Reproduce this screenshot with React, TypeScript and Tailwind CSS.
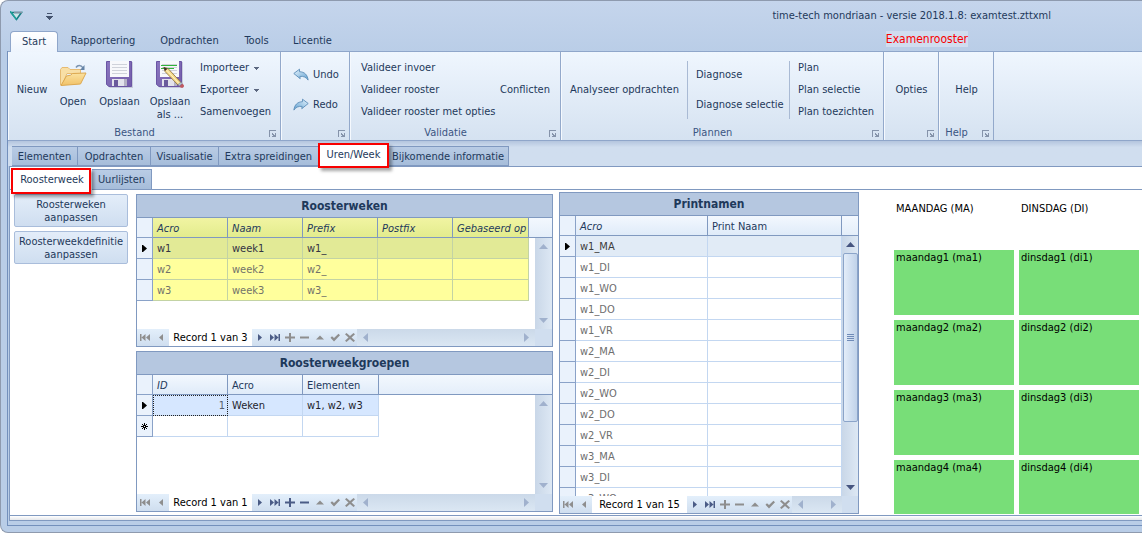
import type { ReactNode } from 'react';
import clsx from 'clsx';

interface Column {
  key: string;
  title: string;
  className: string;
  italic?: boolean;
}

interface GridProps {
  title: string;
  columns: Column[];
  rows: string[][];
  record: string;
  className?: string;
  tone?: 'yellow' | 'white' | 'blue';
  newRow?: boolean;
  scrollable?: boolean;
  canAdd?: boolean;
  narrow?: boolean;
}

const roosterColumns: Column[] = [
  { key: 'acro', title: 'Acro', className: 'w-[75px]', italic: true },
  { key: 'naam', title: 'Naam', className: 'w-[75px]', italic: true },
  { key: 'prefix', title: 'Prefix', className: 'w-[75px]', italic: true },
  { key: 'postfix', title: 'Postfix', className: 'w-[75px]', italic: true },
  { key: 'basis', title: 'Gebaseerd op', className: 'w-[76px]', italic: true },
];

const roosterRows = [
  ['w1', 'week1', 'w1_', '', ''],
  ['w2', 'week2', 'w2_', '', ''],
  ['w3', 'week3', 'w3_', '', ''],
];

const groepColumns: Column[] = [
  { key: 'id', title: 'ID', className: 'w-[75px]', italic: true },
  { key: 'acro', title: 'Acro', className: 'w-[75px]' },
  { key: 'elementen', title: 'Elementen', className: 'w-[76px]' },
];

const printColumns: Column[] = [
  { key: 'acro', title: 'Acro', className: 'w-[132px]', italic: true },
  { key: 'print', title: 'Print Naam', className: 'w-[134px]' },
];

const printRows = ['w1', 'w2', 'w3'].flatMap((week) =>
  ['MA', 'DI', 'WO', 'DO', 'VR'].map((day) => [`${week}_${day}`, '']),
);

// only the rows inside the scroll window are rendered
const visiblePrintRows = printRows.slice(0, 13);

const days = [
  { title: 'MAANDAG (MA)', name: 'maandag', code: 'ma' },
  { title: 'DINSDAG (DI)', name: 'dinsdag', code: 'di' },
];

function Launcher() {
  return (
    <button type="button" aria-label="Meer opties" className="absolute right-[3px] bottom-[2px]">
      <svg width="8" height="8" viewBox="0 0 8 8" shapeRendering="crispEdges">
        <path d="M0 7V0h7v1H1v6z" fill="#8593aa" />
        <path d="M3 3h1v1h1v1h1V3h1v4H3V6h1V5H3z" fill="#8593aa" />
      </svg>
    </button>
  );
}

function RibbonGroup({ caption, className, children }: { caption?: string; className: string; children: ReactNode }) {
  return (
    <section className={clsx('relative flex shrink-0 flex-col border-r border-r-[#93a9cb] border-l border-l-[#f5f9fe]', className)}>
      <div className="flex h-[71px] pt-[5px]">{children}</div>
      <div className="h-[17px] pr-5 text-center leading-[19px] text-[#3b5582]">{caption}</div>
      <Launcher />
    </section>
  );
}

function RibbonItem({ children, caret, className }: { children: ReactNode; caret?: boolean; className?: string }) {
  return (
    <button type="button" className={clsx('flex items-center text-left whitespace-nowrap', className)}>
      {children}
      {caret && (
        <svg className="ml-[5px]" width="5" height="3" viewBox="0 0 5 3" shapeRendering="crispEdges">
          <path d="M0 0h5v1H4v1H3v1H2V2H1V1H0z" fill="#5c6880" />
        </svg>
      )}
    </button>
  );
}

function LargeItem({ icon, children, className }: { icon: ReactNode; children: ReactNode; className: string }) {
  return (
    <button type="button" className={clsx('flex flex-col items-center text-center leading-[13px]', className)}>
      <span className="flex h-[38px] items-center pb-1">{icon}</span>
      {children}
    </button>
  );
}

function FolderIcon() {
  return (
    <svg width="28" height="26" viewBox="0 0 28 26">
      <defs>
        <linearGradient id="folder-front" x1="0" y1="0" x2="0" y2="1">
          <stop offset="0" stopColor="#fbe2a0" />
          <stop offset="1" stopColor="#f1c268" />
        </linearGradient>
      </defs>
      <path d="M1.5 24V8.500L3 6.500h6l2 2h10.500v4H8L3 24z" fill="#f8dfa6" stroke="#e6bb72" />
      <path d="M2 24.500L7.500 15l4-.8 2-1.700 13.500-.5L21.500 23z" fill="url(#folder-front)" stroke="#dca850" strokeLinejoin="round" />
      <path d="M17 6.500c1.500-2.500 5-2.800 7 .3" fill="none" stroke="#7a93b0" strokeWidth="1.500" />
      <path d="M25.500 4v5h-4.500z" fill="#6583a6" />
    </svg>
  );
}

function DiskIcon({ edit }: { edit?: boolean }) {
  return (
    <svg width="32" height="30" viewBox="0 0 32 30">
      <defs>
        <linearGradient id="disk-body" x1="0" y1="0" x2="1" y2="1">
          <stop offset="0" stopColor="#8a76be" />
          <stop offset="1" stopColor="#735caa" />
        </linearGradient>
      </defs>
      <path d="M4 3h25v26H6l-2-2z" fill="#6b6580" opacity=".25" />
      <path d="M2.500 2.500h25v25h-22.500l-2.500-2z" fill="url(#disk-body)" stroke="#6a55a4" />
      <path d="M6 2h19v16H6z" fill="#f7f8fb" />
      <path d="M8 5.500h15M8 8.500h15M8 11.500h15M8 14.500h15" stroke="#cfd2da" />
      {edit && <path d="M7 6.500h16M7 9.500h13" stroke="#32b23c" />}
      <path d="M8 20h15v7H8z" fill="#e3e3ec" />
      <path d="M10 21h4v6h-4z" fill="#6b5b9c" />
      <path d="M20 20h3v7h-3z" fill="#b4b1c4" />
      {edit && (
        <g>
          <path d="M10 8.500l4 1 13 14-3 2.500L11 12.500z" fill="#f5db8c" stroke="#8a6b35" strokeWidth=".8" />
          <path d="M12.500 11L25.500 25" stroke="#fff3c4" />
          <path d="M9.500 8l1.500 4 2.500-2.300z" fill="#3c2f28" />
          <path d="M24 25.500l3-2.500 1.300 1.500-3 2.500z" fill="#b9c2cc" stroke="#7d8791" strokeWidth=".5" />
          <path d="M25.600 27.200l2.800-2.500c2 1 2.200 3.200.3 4-1.200.4-2.400-.3-3.100-1.500z" fill="#c05860" />
        </g>
      )}
    </svg>
  );
}

function ArrowIcon({ flip }: { flip?: boolean }) {
  return (
    <svg className={clsx(flip && '-scale-x-100')} width="16" height="14" viewBox="0 0 16 14">
      <defs>
        <linearGradient id="arrow-fill" x1="0" y1="0" x2="1" y2="1">
          <stop offset="0" stopColor="#e6f4fd" />
          <stop offset="1" stopColor="#5f9fd0" />
        </linearGradient>
      </defs>
      <path
        d="M.8 5.500L6.500 1.200v2.500c5 .2 8 3 8.600 8.400-2-3-4.600-4-8.200-3.700l.3 2.300z"
        fill="url(#arrow-fill)"
        stroke="#5c8db8"
        strokeWidth=".9"
        strokeLinejoin="round"
      />
    </svg>
  );
}

const navPaths = {
  first: 'M0 1h1.500v7H0zM5.500 1v7L1.500 4.500zM10 1v7L6 4.500z',
  prev: 'M7 1v7L3 4.500z',
  next: 'M3 1v7l4-3.500z',
  last: 'M0 1v7l4-3.500zM4.500 1v7l4-3.500zM8.500 1H10v7H8.500z',
  add: 'M4 0h2v3.500h4v2H6V9H4V5.500H0v-2h4z',
  remove: 'M0 3.500h9v2H0z',
  edit: 'M1 6.500h8L5 2.500z',
  check: 'M.5 4.800L2 3.200 4 5 8.500 .8 10 2.200 4 8.500z',
  cancel: 'M1.500 0L5 3 8.500 0 10 1.300 6.500 4.500 10 7.800 8.500 9 5 6 1.500 9 0 7.800l3.500-3.300L0 1.300z',
};

function NavButton({ icon, label, active, wide }: { icon: keyof typeof navPaths; label: string; active?: boolean; wide?: boolean }) {
  return (
    <button type="button" aria-label={label} className={clsx('flex h-[17px] items-center justify-center', wide ? 'w-4' : 'w-[15px]')}>
      <svg width="10" height="9" viewBox="0 0 10 9">
        <path d={navPaths[icon]} fill={active ? '#4b5c86' : '#8e8e8e'} />
      </svg>
    </button>
  );
}

function Triangle({ dir, active }: { dir: 'up' | 'down' | 'left' | 'right'; active?: boolean }) {
  const d = { up: 'M0 7h9L4.500 2z', down: 'M0 2h9L4.500 7z', left: 'M7 0v9L2 4.500z', right: 'M2 0v9l5-4.500z' }[dir];
  return (
    <svg width="9" height="9" viewBox="0 0 9 9">
      <path d={d} fill={active ? '#465580' : '#a0b1cd'} />
    </svg>
  );
}

function VerticalScroll({ active }: { active?: boolean }) {
  return (
    <div
      className={clsx(
        'absolute top-5 right-0 bottom-0 flex flex-col items-center justify-between bg-linear-to-r from-[#c9d7e8] to-[#dde8f4]',
        active ? 'w-4' : 'w-[17px]',
      )}
    >
      <button type="button" aria-label="Omhoog" className="flex h-[17px] items-center">
        <Triangle dir="up" active={active} />
      </button>
      {active && (
        <div className="mb-auto flex h-[169px] w-[15px] flex-col items-center justify-center gap-px rounded-xs border border-[#8ba4c9] bg-linear-to-r from-[#e3edf9] to-[#c0d2e9]">
          <span className="h-px w-[7px] bg-[#6f8bb8]" />
          <span className="h-px w-[7px] bg-[#6f8bb8]" />
          <span className="h-px w-[7px] bg-[#6f8bb8]" />
          <span className="h-px w-[7px] bg-[#6f8bb8]" />
        </div>
      )}
      <button type="button" aria-label="Omlaag" className="flex h-[17px] items-center">
        <Triangle dir="down" active={active} />
      </button>
    </div>
  );
}

function Navigator({ record, canAdd, narrow }: { record: string; canAdd?: boolean; narrow?: boolean }) {
  return (
    <div className="z-10 flex h-[17px] shrink-0 bg-linear-to-b from-[#e3effb] to-[#cfdeef]">
      <NavButton icon="first" label="Eerste" wide />
      <NavButton icon="prev" label="Vorige" wide />
      <span className={clsx('bg-white text-center leading-[17px] whitespace-nowrap text-black', narrow ? 'w-[95px]' : 'w-[83px]')}>
        Record {record}
      </span>
      <NavButton icon="next" label="Volgende" active />
      <NavButton icon="last" label="Laatste" active />
      <NavButton icon="add" label="Toevoegen" active={canAdd} />
      <NavButton icon="remove" label="Verwijderen" active={canAdd} />
      <NavButton icon="edit" label="Bewerken" />
      <NavButton icon="check" label="Bevestigen" />
      <NavButton icon="cancel" label="Annuleren" />
      <div className="flex flex-1 items-center justify-between bg-linear-to-b from-[#cbd9e9] to-[#dbe7f3] px-1">
        <button type="button" aria-label="Naar links">
          <Triangle dir="left" />
        </button>
        <button type="button" aria-label="Naar rechts">
          <Triangle dir="right" />
        </button>
      </div>
      <div className={clsx('bg-[#d0deef]', narrow ? 'w-4' : 'w-[17px]')} />
    </div>
  );
}

function RowMarker({ kind }: { kind?: 'current' | 'new' }) {
  return (
    <td className="border-r border-b border-[#8aa2c8] bg-[#eaf2fc] p-0">
      {kind === 'current' && (
        <svg className="mx-auto" width="5" height="7" viewBox="0 0 5 7">
          <path d="M0 0v7h1l4-3.500L1 0z" fill="#000" />
        </svg>
      )}
      {kind === 'new' && (
        <svg className="mx-auto" width="7" height="7" viewBox="0 0 7 7">
          <path d="M3.500 0v7M0 3.500h7M1 1l5 5M6 1L1 6" stroke="#000" />
          <path d="M3 3h1v1H3z" fill="#fff" />
        </svg>
      )}
    </td>
  );
}

function DataGrid({ title, columns, rows, record, className, tone = 'white', newRow, scrollable, canAdd, narrow }: GridProps) {
  const yellow = tone === 'yellow';
  const cellBorder = yellow ? 'border-[#c3d3a4]' : 'border-[#c3d7f1]';
  const headBg = yellow ? 'bg-linear-to-b from-[#f1f4a2] to-[#e3ec8d]' : 'bg-linear-to-b from-[#f3f8fe] to-[#dfebf9]';

  return (
    <section className={clsx('flex flex-col border border-[#8099c0] bg-white', className)}>
      <h2 className="h-[23px] shrink-0 border-b border-[#8099c0] bg-[#b5c7e0] text-center text-[12px] leading-[23px] font-bold text-[#1e395b]">
        {title}
      </h2>
      <div className="relative min-h-0 flex-1 overflow-hidden">
        <table className="w-full table-fixed border-separate border-spacing-0">
          <thead>
            <tr className="h-5">
              <th aria-label="Status" className="w-4 border-r border-b border-[#8aa2c8] bg-[#eaf2fc] p-0" />
              {columns.map((col) => (
                <th
                  key={col.key}
                  className={clsx(
                    'border-r border-b border-[#8099c0] pt-0.5 pr-0 pb-0 pl-1 text-left leading-4 font-normal whitespace-nowrap text-[#1e395b]',
                    headBg,
                    col.className,
                    col.italic && 'italic',
                  )}
                >
                  {col.title}
                </th>
              ))}
              <th aria-hidden="true" className="border-b border-[#8099c0] bg-linear-to-b from-[#f3f8fe] to-[#e4eefa] p-0" />
            </tr>
          </thead>
          <tbody>
            {rows.map((row, i) => (
              <tr key={row[0]} className="h-[21px]">
                <RowMarker kind={i === 0 ? 'current' : undefined} />
                {row.map((value, c) => (
                  <td
                    key={columns[c].key}
                    className={clsx(
                      'border-r border-b pt-0.5 pr-0.5 pb-0 pl-1 leading-4 whitespace-nowrap',
                      cellBorder,
                      yellow && (i === 0 ? 'bg-[#e2ea96] text-[#333344]' : 'bg-[#ffff9c] text-[#73736a]'),
                      tone === 'white' && (i === 0 ? 'bg-[#e1ebf6] text-[#3c3c3c]' : 'text-[#6e6e6e]'),
                      tone === 'blue' && 'bg-[#d6e7ff]',
                      tone === 'blue' && c > 0 && 'text-[#1e1e2c]',
                      tone === 'blue' && c === 0 && 'text-right text-[#555f70] outline-1 -outline-offset-1 outline-dotted outline-[#222]',
                    )}
                  >
                    {value}
                  </td>
                ))}
                <td className="p-0" />
              </tr>
            ))}
            {newRow && (
              <tr className="h-[21px]">
                <RowMarker kind="new" />
                {columns.map((col) => (
                  <td key={col.key} className={clsx('border-r border-b p-0', cellBorder)} />
                ))}
                <td className="p-0" />
              </tr>
            )}
          </tbody>
        </table>
        <VerticalScroll active={scrollable} />
      </div>
      <Navigator record={record} canAdd={canAdd} narrow={narrow} />
    </section>
  );
}

function Marker({ className }: { className: string }) {
  return (
    <span
      className={clsx('pointer-events-none absolute z-10 border-2 border-[#f80000] shadow-[3px_3px_3px_rgba(0,0,0,0.35)]', className)}
    />
  );
}

const tabClass = 'border border-l-0 border-[#8099c0] bg-linear-to-b from-[#b9cce5] to-[#a6bdda] text-center leading-[19px] whitespace-nowrap';
const sideButton =
  'flex h-[33px] items-center justify-center rounded-xs border border-[#a9bddb] bg-linear-to-b from-[#e3edf9] to-[#cfdef0] text-center leading-[13px]';

export default function App() {
  return (
    <div className="flex h-screen flex-col overflow-hidden rounded-l-lg border-y border-l border-[#8e9aae] bg-linear-to-b from-[#c5d5ec] to-[#b9cde7] to-10% font-['DejaVu_Sans_Condensed','DejaVu_Sans',sans-serif] text-[11px] text-[#1e395b]">
      <header className="flex h-[30px] shrink-0 items-center">
        <svg className="ml-[9px]" width="13" height="10" viewBox="0 0 13 10">
          <path d="M1 1.500h10.500L6.500 8.500z" fill="#cfe5ea" stroke="#157f83" strokeWidth="1.600" />
          <path d="M4 1.500h8" stroke="#8493a5" strokeWidth="1.500" />
          <path d="M0 0l6.500 8.500" stroke="#1fa39b" strokeWidth="1.300" />
        </svg>
        <button type="button" aria-label="Werkbalk aanpassen" className="ml-[23px]">
          <svg width="7" height="7" viewBox="0 0 7 7" shapeRendering="crispEdges">
            <path d="M1 0h5v1H1zM0 3h7v1H6v1H5v1H4v1H3V6H2V5H1V4H0z" fill="#44536e" />
          </svg>
        </button>
        <h1 className="ml-auto pr-[91px]">time-tech mondriaan - versie 2018.1.8: examtest.zttxml</h1>
      </header>

      <nav className="relative flex h-5 shrink-0 items-end pl-[9px]">
        <button
          type="button"
          className="z-10 -mb-px h-[21px] w-12 rounded-t-sm border border-b-0 border-[#8fa6ca] bg-linear-to-b from-white to-[#eef5fd] leading-5"
        >
          Start
        </button>
        <button type="button" className="h-5 w-[90px]">Rapportering</button>
        <button type="button" className="h-5 w-[83px]">Opdrachten</button>
        <button type="button" className="h-5 w-[51px]">Tools</button>
        <button type="button" className="h-5 w-[61px]">Licentie</button>
        <span className="mr-[174px] mb-1 ml-auto bg-[#d0ddef] text-[12px] leading-4 text-[#f80000]">Examenrooster</span>
      </nav>

      <div className="mb-[6px] ml-[6px] flex min-h-0 flex-1 flex-col border-b border-l border-[#7390bc]">
        <div className="flex h-[90px] shrink-0 border-y border-[#8fa6ca] bg-linear-to-b from-[#eff6fe] to-[#d5e2f1]">
          <RibbonGroup caption="Bestand" className="w-[273px]">
            <RibbonItem className="w-[46px] justify-center">Nieuw</RibbonItem>
            <LargeItem icon={<FolderIcon />} className="w-9">Open</LargeItem>
            <LargeItem icon={<DiskIcon />} className="w-[57px]">Opslaan</LargeItem>
            <LargeItem icon={<DiskIcon edit />} className="w-11">
              Opslaan
              <br />
              als ...
            </LargeItem>
            <div className="grid grid-rows-3 pl-2">
              <RibbonItem caret>Importeer</RibbonItem>
              <RibbonItem caret>Exporteer</RibbonItem>
              <RibbonItem>Samenvoegen</RibbonItem>
            </div>
          </RibbonGroup>
          <RibbonGroup className="w-[69px]">
            <div className="grid grid-rows-2 py-[3px] pl-[11px]">
              <RibbonItem className="gap-1">
                <ArrowIcon />
                Undo
              </RibbonItem>
              <RibbonItem className="gap-1">
                <ArrowIcon flip />
                Redo
              </RibbonItem>
            </div>
          </RibbonGroup>
          <RibbonGroup caption="Validatie" className="w-[211px]">
            <div className="flex flex-1 justify-between px-[10px]">
              <div className="grid grid-rows-3">
                <RibbonItem>Valideer invoer</RibbonItem>
                <RibbonItem>Valideer rooster</RibbonItem>
                <RibbonItem>Valideer rooster met opties</RibbonItem>
              </div>
              <RibbonItem>Conflicten</RibbonItem>
            </div>
          </RibbonGroup>
          <RibbonGroup caption="Plannen" className="w-[323px]">
            <RibbonItem className="w-[125px] justify-center">Analyseer opdrachten</RibbonItem>
            <div className="my-1 w-px bg-[#a9bad4]" />
            <div className="grid w-[101px] grid-rows-2 py-[3px] pl-2">
              <RibbonItem>Diagnose</RibbonItem>
              <RibbonItem>Diagnose selectie</RibbonItem>
            </div>
            <div className="my-1 w-px bg-[#a9bad4]" />
            <div className="grid grid-rows-3 pl-2">
              <RibbonItem>Plan</RibbonItem>
              <RibbonItem>Plan selectie</RibbonItem>
              <RibbonItem>Plan toezichten</RibbonItem>
            </div>
          </RibbonGroup>
          <RibbonGroup className="w-[55px]">
            <RibbonItem className="flex-1 justify-center">Opties</RibbonItem>
          </RibbonGroup>
          <RibbonGroup caption="Help" className="w-[55px]">
            <RibbonItem className="flex-1 justify-center">Help</RibbonItem>
          </RibbonGroup>
        </div>

        <div className="flex h-[25px] shrink-0 items-end bg-linear-to-b from-[#b4c5de] to-[#d0deef] to-25% pl-1">
          <button type="button" className={clsx(tabClass, 'h-5 w-[66px] border-l')}>Elementen</button>
          <button type="button" className={clsx(tabClass, 'h-5 w-[73px]')}>Opdrachten</button>
          <button type="button" className={clsx(tabClass, 'h-5 w-[68px]')}>Visualisatie</button>
          <button type="button" className={clsx(tabClass, 'h-5 w-[100px]')}>Extra spreidingen</button>
          <button type="button" className="relative h-[22px] w-[69px] bg-white leading-5">
            Uren/Week
            <Marker className="-top-px -right-px -bottom-[2px] -left-px" />
          </button>
          <button type="button" className={clsx(tabClass, 'h-5 w-[121px]')}>Bijkomende informatie</button>
        </div>

        <main className="mb-1 ml-px flex min-h-0 flex-1 flex-col border-y border-l border-[#8099c0] bg-white">
          <div className="flex h-[23px] shrink-0 items-end border-b border-[#8099c0] pl-0.5">
            <button type="button" className="relative -mb-px h-[21px] w-[80px] bg-white leading-5">
              Roosterweek
              <Marker className="-top-px right-px -bottom-1 -left-px" />
            </button>
            <button type="button" className={clsx(tabClass, 'h-5 w-[60px] border-b-0 border-l')}>Uurlijsten</button>
          </div>

          <div className="flex min-h-0 flex-1 border-b border-[#8099c0] pl-1">
            <div className="mt-1 flex w-[114px] shrink-0 flex-col gap-1">
              <button type="button" className={sideButton}>
                Roosterweken
                <br />
                aanpassen
              </button>
              <button type="button" className={sideButton}>
                Roosterweekdefinitie
                <br />
                aanpassen
              </button>
            </div>

            <div className="mt-1 mb-[3px] ml-2 flex min-h-0 w-[417px] shrink-0 flex-col gap-1">
              <DataGrid
                title="Roosterweken"
                columns={roosterColumns}
                rows={roosterRows}
                record="1 van 3"
                tone="yellow"
                className="h-[153px] shrink-0"
              />
              <DataGrid
                title="Roosterweekgroepen"
                columns={groepColumns}
                rows={[['1', 'Weken', 'w1, w2, w3']]}
                record="1 van 1"
                tone="blue"
                newRow
                canAdd
                className="min-h-0 flex-1"
              />
            </div>

            <DataGrid
              title="Printnamen"
              columns={printColumns}
              rows={visiblePrintRows}
              record="1 van 15"
              scrollable
              narrow
              className="mt-0.5 mb-px ml-1.5 w-[300px] shrink-0"
            />

            <div className="ml-[35px] flex min-w-0 flex-1 gap-[5px] overflow-hidden text-black">
              {days.map((day) => (
                <section key={day.code} className="mb-px flex w-[120px] shrink-0 flex-col gap-[5px] overflow-hidden">
                  <h3 className="h-[55px] shrink-0 pt-[11px] pl-0.5 leading-4">{day.title}</h3>
                  {[1, 2, 3, 4].map((hour) => (
                    <div key={hour} className="h-[65px] shrink-0 bg-[#78de78] pl-0.5 leading-4">
                      {day.name}
                      {hour} ({day.code}
                      {hour})
                    </div>
                  ))}
                </section>
              ))}
            </div>
          </div>
          <div className="h-1 shrink-0 bg-linear-to-b from-white to-[#e4e6ea]" />
        </main>
      </div>
    </div>
  );
}
